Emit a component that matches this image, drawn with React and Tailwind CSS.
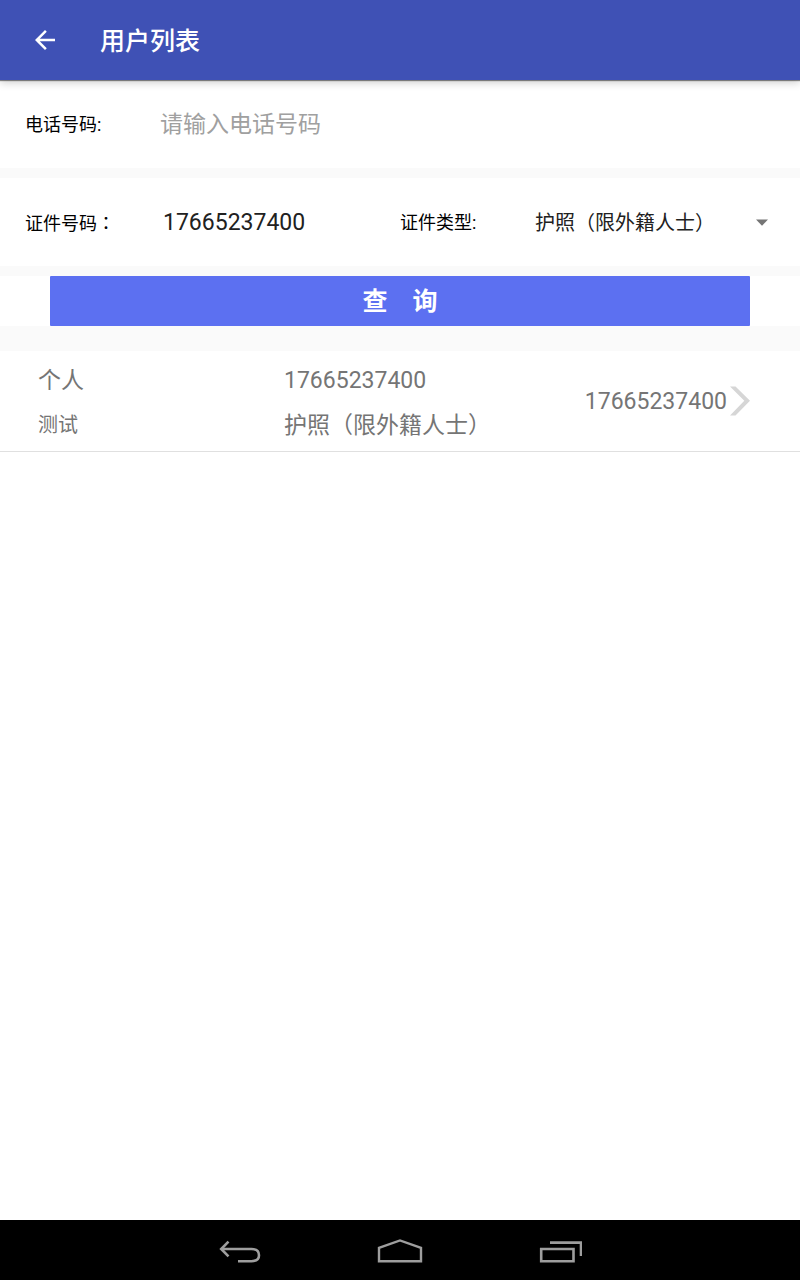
import React from "react";

const users = [
  {
    kind: "个人",
    name: "测试",
    idNumber: "17665237400",
    idType: "护照（限外籍人士）",
    phone: "17665237400",
  },
];

function AppBar() {
  return (
    <header className="relative z-10 flex h-20 items-center bg-[#3f51b5] px-[30px] text-white shadow-[0_1px_1px_rgba(0,0,0,0.45),0_3px_8px_rgba(0,0,0,0.18)]">
      <button type="button" aria-label="返回" className="flex size-[30px] items-center justify-center">
        <svg viewBox="0 0 24 24" className="size-[30px]" fill="currentColor" aria-hidden="true">
          <path d="M20 11H7.83l5.59-5.59L12 4l-8 8 8 8 1.41-1.41L7.83 13H20v-2z" />
        </svg>
      </button>
      <h1 className="ml-10 pt-1 text-[25px] leading-8 font-medium">用户列表</h1>
    </header>
  );
}

function SearchForm() {
  return (
    <form className="flex flex-col gap-[10px]" onSubmit={(e) => e.preventDefault()}>
      <div className="flex h-[88px] items-center bg-white px-[25px]">
        <label htmlFor="phone" className="w-[135px] shrink-0 pt-[2px] text-[18px] leading-6 text-black">
          电话号码:
        </label>
        <input
          id="phone"
          type="tel"
          placeholder="请输入电话号码"
          className="h-12 min-w-0 flex-1 bg-transparent text-[23px] text-[#212121] outline-none placeholder:text-[#a0a0a0]"
        />
      </div>

      <div className="grid h-[88px] grid-cols-2 items-center bg-white">
        <div className="flex items-center pl-[25px]">
          <label htmlFor="id-number" className="w-[138px] shrink-0 pt-[2px] text-[18px] leading-6 text-black">
            证件号码<span className="font-['Noto_Sans_CJK_TC',sans-serif]">：</span>
          </label>
          <input
            id="id-number"
            type="text"
            defaultValue="17665237400"
            className="h-12 min-w-0 flex-1 bg-transparent text-[23px] text-[#212121] outline-none"
          />
        </div>
        <div className="flex items-center">
          <label htmlFor="id-type" className="w-[135px] shrink-0 pt-[2px] text-[18px] leading-6 text-black">
            证件类型:
          </label>
          <div className="grid min-w-0 flex-1 items-center">
            <select
              id="id-type"
              className="col-start-1 row-start-1 h-12 w-full appearance-none bg-transparent font-['Noto_Sans_CJK_SC',sans-serif] text-[20px] text-[#212121] outline-none"
            >
              <option>护照（限外籍人士）</option>
            </select>
            <svg
              viewBox="0 0 12 7"
              className="pointer-events-none col-start-1 row-start-1 mr-8 h-[7px] w-3 justify-self-end"
              fill="#757575"
              aria-hidden="true"
            >
              <path d="M0 0.5h12L6 6.8z" />
            </svg>
          </div>
        </div>
      </div>

      <div className="flex bg-white px-[50px]">
        <button
          type="submit"
          className="h-[50px] flex-1 rounded-[1px] bg-[#5c70f1] pt-[2px] text-[25px] font-bold text-white"
        >
          查　询
        </button>
      </div>
    </form>
  );
}

function UserRow({ user }) {
  return (
    <li className="border-b border-[#e0e0e0]">
      <a href="#user" className="flex h-[100px] items-center pr-[50px] pl-[38px] text-[23px] text-[#757575]">
        <div className="w-[246px] shrink-0 pt-[3px]">
          <p className="leading-[45px]">{user.kind}</p>
          <p className="text-[20px] leading-[45px]">{user.name}</p>
        </div>
        <div className="min-w-0 flex-1 pt-[3px]">
          <p className="leading-[45px]">{user.idNumber}</p>
          <p className="leading-[45px]">{user.idType}</p>
        </div>
        <span className="mr-[3px] pt-[3px]">{user.phone}</span>
        <svg viewBox="0 0 20 30" className="h-[30px] w-5" fill="#d6d6d6" aria-hidden="true">
          <path d="M0 0.5h5.5L20 14.8 5.5 29.5H0L14.3 14.8z" />
        </svg>
      </a>
    </li>
  );
}

function NavBar() {
  return (
    <nav className="flex h-[60px] items-center justify-center bg-black pt-[2px] text-[#9e9e9e]">
      <button type="button" aria-label="后退" className="flex w-40 justify-center">
        <svg viewBox="0 0 44 30" className="h-[30px] w-11" fill="none" stroke="currentColor" strokeWidth="2.6" aria-hidden="true">
          <path d="M3 13H33.5C39 13 41 16 41 19.2C41 22.4 39 25.2 33.5 25.2H20" />
          <path d="M10.5 5.6 3.2 13 10.5 20.4" />
        </svg>
      </button>
      <button type="button" aria-label="主屏幕" className="flex w-40 justify-center">
        <svg viewBox="0 0 46 30" className="h-[30px] w-[46px]" fill="none" stroke="currentColor" strokeWidth="2.4" aria-hidden="true">
          <path d="M2 25.2V11.8L23 4.4 44 11.8V25.2Z" />
        </svg>
      </button>
      <button type="button" aria-label="最近任务" className="flex w-40 justify-center">
        <svg viewBox="0 0 44 30" className="h-[30px] w-11" fill="none" stroke="currentColor" strokeWidth="2.6" aria-hidden="true">
          <path d="M3.2 13H35.5V25.2H3.2Z" />
          <path d="M12 6.6H43V20" />
        </svg>
      </button>
    </nav>
  );
}

export default function App() {
  return (
    <div className="flex min-h-screen flex-col bg-white font-[Roboto,'Noto_Sans_CJK_SC',sans-serif]">
      <AppBar />
      <main className="flex-1">
        <div className="bg-[#fafafa] pb-[25px]">
          <SearchForm />
        </div>
        <ul>
          {users.map((user) => (
            <UserRow key={user.idNumber} user={user} />
          ))}
        </ul>
      </main>
      <NavBar />
    </div>
  );
}
